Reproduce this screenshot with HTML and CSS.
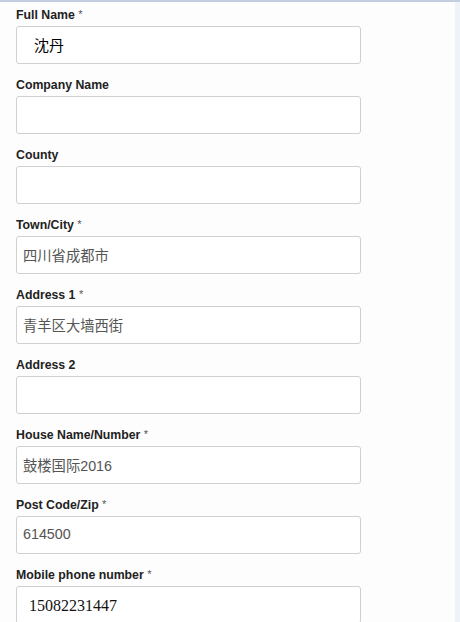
FILE: index.html
```html
<!DOCTYPE html>
<html>
<head>
<meta charset="utf-8">
<link rel="stylesheet" href="styles.css">
</head>
<body>
<div class="page">
  <form class="form">
    <div class="group">
      <label class="label">Full Name <span class="req">*</span></label>
      <div class="input"><span class="val val-name">沈丹</span></div>
    </div>
    <div class="group">
      <label class="label">Company Name</label>
      <div class="input"></div>
    </div>
    <div class="group">
      <label class="label">County</label>
      <div class="input"></div>
    </div>
    <div class="group">
      <label class="label">Town/City <span class="req">*</span></label>
      <div class="input"><span class="val">四川省成都市</span></div>
    </div>
    <div class="group">
      <label class="label">Address 1 <span class="req">*</span></label>
      <div class="input"><span class="val">青羊区大墙西街</span></div>
    </div>
    <div class="group">
      <label class="label">Address 2</label>
      <div class="input"></div>
    </div>
    <div class="group">
      <label class="label">House Name/Number <span class="req">*</span></label>
      <div class="input"><span class="val">鼓楼国际2016</span></div>
    </div>
    <div class="group">
      <label class="label">Post Code/Zip <span class="req">*</span></label>
      <div class="input"><span class="val">614500</span></div>
    </div>
    <div class="group">
      <label class="label">Mobile phone number <span class="req">*</span></label>
      <div class="input"><span class="val val-phone">15082231447</span></div>
    </div>
  </form>
  <div class="strip"></div>
</div>
</body>
</html>
```
FILE: styles.css
```css
html, body {
  margin: 0;
  padding: 0;
  height: 100%;
  overflow: hidden;
}
body {
  background: #fdfdfd;
  font-family: "Liberation Sans", Arial, "Noto Sans CJK SC", sans-serif;
}
.page {
  display: flex;
  border-top: 2px solid #c3cfe0;
  height: 100%;
  box-sizing: border-box;
}
.form {
  flex: 1;
  padding: 2px 0 0 16px;
  display: flex;
  flex-direction: column;
}
.strip {
  width: 5px;
  background: #eef2f9;
}
.group {
  display: flex;
  flex-direction: column;
  margin-bottom: 10px;
}
.label {
  display: block;
  box-sizing: border-box;
  height: 20px;
  overflow: hidden;
  font-size: 12.3px;
  font-weight: bold;
  line-height: 17px;
  color: #222;
  padding-top: 3px;
  margin-bottom: 2px;
  flex-shrink: 0;
}
.req {
  font-weight: normal;
  font-size: 11px;
  line-height: 1;
  color: #555;
  vertical-align: 1px;
}
.input {
  width: 345px;
  height: 38px;
  box-sizing: border-box;
  border: 1px solid #d0d0d0;
  border-radius: 3px;
  background: #fff;
  display: flex;
  align-items: center;
  padding-left: 6px;
  flex-shrink: 0;
}
.val {
  font-size: 14.3px;
  color: #555;
  font-family: "Liberation Sans", Arial, "Noto Sans CJK SC", sans-serif;
  margin-top: -2px;
}
.val-name {
  color: #000;
  font-size: 15px;
  padding-left: 11px;
  font-family: "Noto Sans CJK SC", sans-serif;
}
.val-phone {
  color: #111;
  font-size: 16px;
  padding-left: 6px;
  margin-top: 2px;
  font-family: "Liberation Serif", "Times New Roman", serif;
}
```
